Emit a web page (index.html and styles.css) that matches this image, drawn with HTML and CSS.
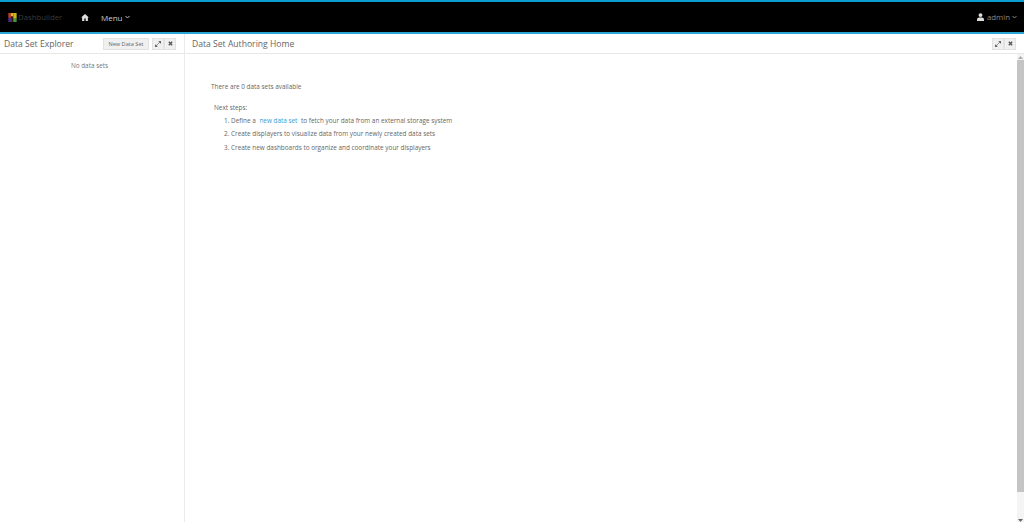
FILE: index.html
```html
<!DOCTYPE html>
<html lang="en">
<head>
<meta charset="utf-8">
<title>Dashbuilder</title>
<link rel="stylesheet" href="styles.css">
</head>
<body>
<nav class="nav">
  <div class="brand">
    <svg class="logo" width="9" height="9" viewBox="0 0 10 11"><rect width="10" height="11" fill="#2a1a10"/><rect x="0" y="0" width="3" height="6" fill="#c6372c"/><rect x="3" y="0" width="3" height="4" fill="#e0b51e"/><rect x="6" y="0" width="4" height="7" fill="#c9b52a"/><rect x="0" y="6" width="4" height="5" fill="#4a2a90"/><rect x="6" y="7" width="4" height="4" fill="#3f9a3a"/></svg>
    <span class="brand-text">Dashbuilder</span>
  </div>
  <svg class="home" width="8" height="7" viewBox="0 0 9 8"><path d="M4.5 0 L9 4 L7.8 4 L7.8 8 L5.3 8 L5.3 5.2 L3.7 5.2 L3.7 8 L1.2 8 L1.2 4 L0 4 Z" fill="#ddd"/></svg>
  <span class="menu">Menu <svg class="caret" width="5" height="4" viewBox="0 0 5 4"><path d="M.5 1 L2.5 3 L4.5 1" fill="none" stroke="#bbb"/></svg></span>
  <span class="user">
    <svg width="7" height="8" viewBox="0 0 8 9"><circle cx="4" cy="2.3" r="2.2" fill="#ddd"/><path d="M0 9 L0 7 Q0 5.3 2.5 5 L5.5 5 Q8 5.3 8 7 L8 9 Z" fill="#ddd"/></svg>
    <span class="user-name">admin</span>
    <svg class="caret" width="5" height="4" viewBox="0 0 5 4"><path d="M.5 1 L2.5 3 L4.5 1" fill="none" stroke="#888"/></svg>
  </span>
</nav>
<div class="workspace">
  <aside class="side">
    <header class="panel-head">
      <h2 class="title">Data Set Explorer</h2>
      <div class="tools">
        <button class="btn btn-new">New Data Set</button>
        <div class="group">
          <button class="btn btn-icon"><svg width="6" height="6" viewBox="0 0 6 6"><path d="M3.6 0H6V2.4ZM0 6V3.6L2.4 6ZM1 5 5 1" fill="#666" stroke="#666" stroke-width=".7"/></svg></button>
          <button class="btn btn-icon"><svg width="5" height="5" viewBox="0 0 6 6"><path d="M1 1 5 5M5 1 1 5" stroke="#555" stroke-width="1.6"/></svg></button>
        </div>
      </div>
    </header>
    <p class="empty">No data sets</p>
  </aside>
  <main class="main">
    <header class="panel-head main-head">
      <h2 class="title">Data Set Authoring Home</h2>
      <div class="group">
        <button class="btn btn-icon"><svg width="6" height="6" viewBox="0 0 6 6"><path d="M3.6 0H6V2.4ZM0 6V3.6L2.4 6ZM1 5 5 1" fill="#666" stroke="#666" stroke-width=".7"/></svg></button>
        <button class="btn btn-icon"><svg width="5" height="5" viewBox="0 0 6 6"><path d="M1 1 5 5M5 1 1 5" stroke="#555" stroke-width="1.6"/></svg></button>
      </div>
    </header>
    <div class="main-body">
      <div class="content">
        <p class="avail">There are 0 data sets available</p>
        <p class="next">Next steps:</p>
        <ol class="steps">
          <li>Define a <a class="link">new data set</a> to fetch your data from an external storage system</li>
          <li>Create displayers to visualize data from your newly created data sets</li>
          <li>Create new dashboards to organize and coordinate your displayers</li>
        </ol>
      </div>
      <div class="scrollbar">
        <div class="arrow up"><svg width="5" height="3" viewBox="0 0 5 3"><path d="M2.5 0 5 3H0Z" fill="#aaa"/></svg></div>
        <div class="thumb"></div>
        <div class="arrow down"><svg width="5" height="3" viewBox="0 0 5 3"><path d="M2.5 3 5 0H0Z" fill="#666"/></svg></div>
      </div>
    </div>
  </main>
</div>
</body>
</html>
```
FILE: styles.css
```css
* { box-sizing: border-box; }
html, body { height: 100%; }
body {
  margin: 0;
  height: 522px;
  overflow: hidden;
  display: flex;
  flex-direction: column;
  background: #fff;
  color: #555;
  font-family: "Open Sans", sans-serif;
  font-size: 6.4px;
}
.nav {
  height: 34px;
  flex: none;
  background: #000;
  border-top: 2px solid #0a9fd0;
  border-bottom: 2px solid #29a6d6;
  display: flex;
  align-items: center;
  padding-left: 8px;
}
.brand { display: flex; align-items: center; gap: 1px; width: 73px; }
.logo { display: block; }
.brand-text { color: #3a3a3a; font-size: 7.8px; }
.home { margin-right: 12px; }
.menu { color: #ccc; font-size: 8px; display: flex; align-items: center; gap: 2px; }
.user { margin-left: auto; margin-right: 7px; display: flex; align-items: center; gap: 2px; color: #888; font-size: 7.8px; }
.user-name { margin-left: 1px; }
.workspace { flex: 1; display: flex; min-height: 0; }
.side { width: 185px; flex: none; border-right: 1px solid #eaeaea; }
.main { flex: 1; min-width: 0; display: flex; flex-direction: column; }
.panel-head {
  height: 20px;
  flex: none;
  border-bottom: 1px solid #e8e8e8;
  display: flex;
  align-items: center;
  justify-content: space-between;
  padding: 0 8px 0 4px;
}
.main-head { padding: 0 8px 0 7px; }
.title { margin: 0; font-size: 8.6px; font-weight: 400; color: #666; }
.tools { display: flex; gap: 3px; align-items: center; }
.group { display: flex; }
.btn {
  height: 12px;
  padding: 0;
  margin: 0;
  border: 1px solid #e2e2e2;
  background: #f0f0f0;
  color: #666;
  font-family: inherit;
  display: flex;
  align-items: center;
  justify-content: center;
}
.btn-new { width: 46px; font-size: 5.6px; }
.btn-icon { width: 12px; }
.empty { margin: 7px 0 0; padding-right: 5px; text-align: center; color: #777; }
.main-body { flex: 1; display: flex; min-height: 0; }
.content { flex: 1; padding: 28px 0 0 26px; color: #666; }
.avail { margin: 0; line-height: 10px; }
.next { margin: 11px 0 0 3px; line-height: 10px; }
.steps { margin: 2px 0 0; padding-left: 20px; }
.steps li { height: 13.4px; line-height: 12px; }
.steps li::marker { color: #666; }
.link { color: #3a9ccf; margin: 0 2px; }
.scrollbar { width: 7px; flex: none; display: flex; flex-direction: column; background: #f4f4f4; }
.thumb { flex: 1; background: #c4c4c4; }
.arrow { flex: none; display: flex; justify-content: center; }
.up { height: 6px; align-items: center; }
.down { height: 30px; align-items: flex-end; }
```
